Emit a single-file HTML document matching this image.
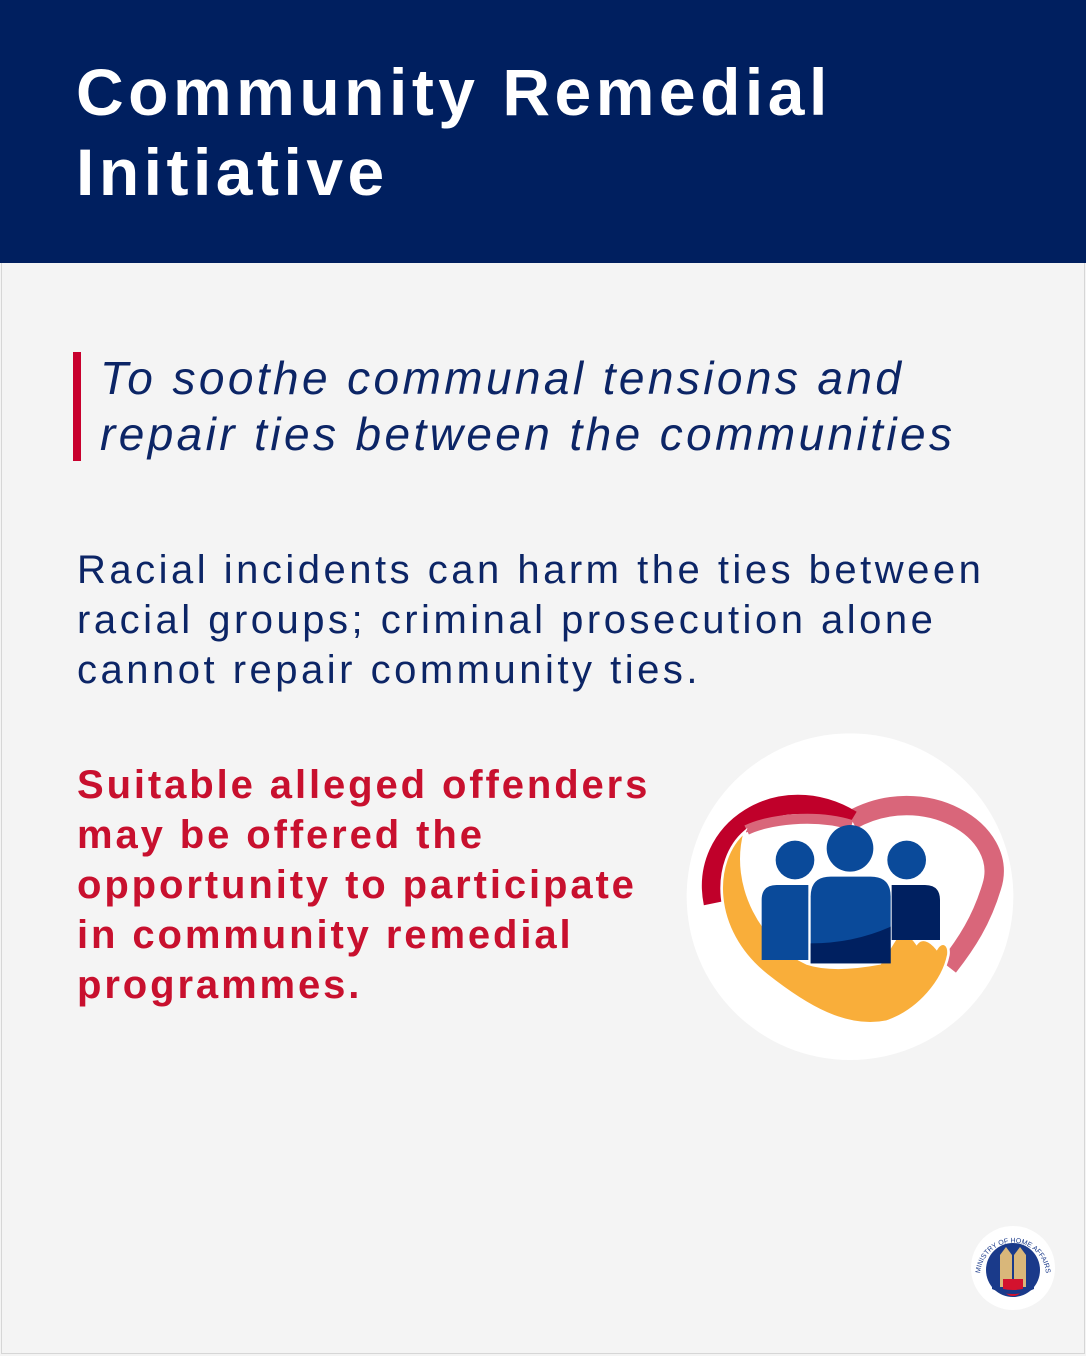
<!DOCTYPE html>
<html><head><meta charset="utf-8"><style>
*{margin:0;padding:0;box-sizing:border-box}
body{width:1086px;height:1356px;background:#f4f4f4;font-family:"Liberation Sans",sans-serif;position:relative;overflow:hidden}
.hdr{position:absolute;left:0;top:0;width:1086px;height:263px;background:#001f5f}
.title{position:absolute;left:76px;top:52px;color:#fff;font-weight:bold;font-size:66px;line-height:80px;letter-spacing:4.5px}
.frame{position:absolute;left:1px;top:263px;width:1084px;height:1091px;border:1px solid #d6d6d6;border-top:none}
.bar{position:absolute;left:73px;top:352px;width:8px;height:109px;background:#c8002d}
.q{position:absolute;left:100px;top:350px;font-style:italic;font-size:46px;line-height:56px;color:#0c2566;letter-spacing:3.4px}
.b{position:absolute;left:77px;top:545px;font-size:40px;line-height:50px;color:#0c2566;letter-spacing:3.5px}
.r{position:absolute;left:77px;top:760px;font-size:40px;line-height:50px;color:#c8102e;font-weight:bold;letter-spacing:2.9px}
</style></head><body>
<div class="hdr"><div class="title">Community Remedial<br>Initiative</div></div>
<div class="frame"></div>
<div class="bar"></div>
<div class="q">To soothe communal tensions and<br>repair ties between the communities</div>
<div class="b">Racial incidents can harm the ties between<br>racial groups; criminal prosecution alone<br>cannot repair community ties.</div>
<div class="r">Suitable alleged offenders<br>may be offered the<br>opportunity to participate<br>in community remedial<br>programmes.</div>
<svg style="position:absolute;left:680px;top:730px" width="340" height="330" viewBox="0 0 1020 990">
<circle cx="510" cy="500" r="490" fill="#fff"/>
<path d="M515,270 C730,150 990,300 935,470 C905,570 860,640 805,710" fill="none" stroke="#d9667a" stroke-width="58"/>
<path d="M100,520 C55,300 300,140 515,270" fill="none" stroke="#c0002a" stroke-width="58"/>
<path d="M200,300 C260,270 400,250 515,285" fill="none" stroke="#d9667a" stroke-width="30"/>
<path d="M195,305 C95,390 90,600 260,735 C380,830 500,900 620,875 C720,840 790,750 805,675 C810,640 785,630 770,655 C750,630 725,620 710,640 C690,610 660,605 650,620 L600,700 C520,715 440,720 380,700 C250,640 150,470 195,305 Z" fill="#f9ae3a" stroke="#fff" stroke-width="8"/>
<circle cx="345" cy="390" r="58" fill="#0a4a9a"/>
<circle cx="510" cy="355" r="70" fill="#0a4a9a"/>
<circle cx="680" cy="390" r="58" fill="#0a4a9a"/>
<path d="M245,690 L245,510 Q245,465 290,465 L385,465 L385,690 Z" fill="#0a4a9a"/>
<path d="M635,630 L635,465 L735,465 Q780,465 780,510 L780,630 Z" fill="#002060"/>
<path d="M392,700 L392,500 Q392,440 452,440 L572,440 Q632,440 632,500 L632,700 Z" fill="#0a4a9a"/>
<path d="M392,640 Q520,640 632,590 L632,700 L392,700 Z" fill="#002060"/>
</svg>
<svg style="position:absolute;left:970px;top:1225px" width="86" height="86" viewBox="0 0 86 86">
<defs><path id="arc" d="M12,62 A33,33 0 1 1 74,62"/></defs>
<circle cx="43" cy="43" r="42" fill="#fff"/>
<circle cx="43" cy="45" r="27" fill="#1a3a8a"/>
<path d="M30,62 L30,30 L36,22 L42,30 L42,62 Z M44,62 L44,30 L50,22 L56,30 L56,62Z" fill="#d9b77a"/>
<path d="M33,54 L53,54 L53,66 Q43,76 33,66 Z" fill="#d3122e"/>
<path d="M22,60 Q43,70 64,60 L64,64 Q43,74 22,64Z" fill="#1a3a8a"/>
<text font-size="7" fill="#1a3a8a" font-family="Liberation Sans"><textPath href="#arc" startOffset="50%" text-anchor="middle">MINISTRY OF HOME AFFAIRS</textPath></text>
</svg>
</body></html>
